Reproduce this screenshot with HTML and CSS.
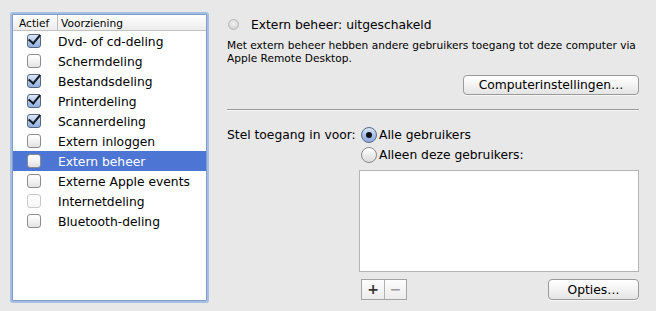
FILE: index.html
```html
<!DOCTYPE html>
<html lang="nl">
<head>
    <meta charset="UTF-8">
    <title>Delen - Extern beheer</title>
    <link rel="stylesheet" href="styles.css">
</head>
<body>
    <div class="window">
        <div class="services">
            <div class="services-head">
                <span class="col-on">Actief</span>
                <span class="col-name">Voorziening</span>
            </div>
            <ul class="service-list">
                <li class="service"><span class="check checked"></span><span class="service-name">Dvd- of cd-deling</span></li>
                <li class="service"><span class="check"></span><span class="service-name">Schermdeling</span></li>
                <li class="service"><span class="check checked"></span><span class="service-name">Bestandsdeling</span></li>
                <li class="service"><span class="check checked"></span><span class="service-name">Printerdeling</span></li>
                <li class="service"><span class="check checked"></span><span class="service-name">Scannerdeling</span></li>
                <li class="service"><span class="check"></span><span class="service-name">Extern inloggen</span></li>
                <li class="service selected"><span class="check"></span><span class="service-name">Extern beheer</span></li>
                <li class="service"><span class="check"></span><span class="service-name">Externe Apple events</span></li>
                <li class="service"><span class="check disabled"></span><span class="service-name">Internetdeling</span></li>
                <li class="service"><span class="check"></span><span class="service-name">Bluetooth-deling</span></li>
            </ul>
        </div>

        <div class="pane">
            <div class="status">
                <span class="status-dot"></span>
                <span class="status-text">Extern beheer: uitgeschakeld</span>
            </div>
            <p class="desc">Met extern beheer hebben andere gebruikers toegang tot deze computer via<br>Apple Remote Desktop.</p>
            <div class="btn-row">
                <button class="btn btn-wide">Computerinstellingen…</button>
            </div>
            <div class="divider"></div>

            <div class="access">
                <span class="access-label">Stel toegang in voor:</span>
                <div class="access-opts">
                    <label class="radio-row"><span class="radio on"></span>Alle gebruikers</label>
                    <label class="radio-row"><span class="radio"></span>Alleen deze gebruikers:</label>
                    <div class="user-list"></div>
                    <div class="list-tools">
                        <div class="seg">
                            <span class="seg-btn">+</span>
                            <span class="seg-btn dim">−</span>
                        </div>
                        <button class="btn btn-opts">Opties…</button>
                    </div>
                </div>
            </div>
        </div>
    </div>
</body>
</html>
```

FILE: styles.css
```css
:root {
    --bg: #e8e8e8;
    --select: #4d75d3;
    --text: #000;
    --font: 'DejaVu Sans', 'Liberation Sans', Arial, sans-serif;
}

* {
    box-sizing: border-box;
}

body {
    margin: 0;
    background: var(--bg);
    font-family: var(--font);
    color: var(--text);
}

.window {
    display: flex;
    align-items: flex-start;
    width: 656px;
    height: 311px;
    padding: 14px 0 0 12px;
}

/* linker lijst met voorzieningen */
.services {
    width: 195px;
    height: 287px;
    background: #fff;
    border: 1px solid #7f9cc9;
    box-shadow: 0 0 0 2px #a5bfe3;
    border-radius: 1px;
}

.services-head {
    display: flex;
    height: 16px;
    font-size: 10.6px;
    line-height: 16px;
    background: linear-gradient(#ffffff, #ececec);
    border-bottom: 1px solid #c2c2c2;
}

.col-on {
    width: 45px;
    padding-left: 6px;
    border-right: 1px solid #bdbdbd;
}

.col-name {
    padding-left: 3px;
}

.service-list {
    list-style: none;
    margin: 0;
    padding: 0;
}

.service {
    display: flex;
    align-items: center;
    height: 20px;
    font-size: 12.3px;
}

.service.selected {
    background: var(--select);
    color: #fff;
}

.check {
    width: 14px;
    height: 14px;
    margin: 0 17px 0 14px;
    border: 1px solid #8c8c8c;
    border-radius: 3px;
    background: linear-gradient(#ffffff, #f4f4f4 45%, #e2e2e2);
    position: relative;
}

.check.checked {
    border-color: #54657e;
    background: linear-gradient(#dfe9f8, #b3c9ec 50%, #90afe0);
}

.check.checked::after {
    content: "";
    position: absolute;
    left: 3px;
    top: -3px;
    width: 5px;
    height: 10px;
    border: solid #151a22;
    border-width: 0 2.5px 2.5px 0;
    transform: rotate(40deg);
}

.check.disabled {
    border-color: #c9c9c9;
    background: linear-gradient(#ffffff, #f6f6f6);
}

.service-name {
    white-space: nowrap;
    padding-top: 1px;
}

/* rechter paneel */
.pane {
    width: 412px;
    margin-left: 20px;
    display: flex;
    flex-direction: column;
}

.status {
    display: flex;
    align-items: center;
    height: 20px;
    padding-top: 1px;
    font-size: 12.3px;
}

.status-dot {
    width: 11px;
    height: 11px;
    margin: 0 12px 0 1px;
    border-radius: 50%;
    border: 1px solid #b8b8b8;
    background: radial-gradient(circle at 50% 40%, #f2f2f2, #c9c9c9);
}

.desc {
    margin: 5px 0 0;
    font-size: 10.6px;
    line-height: 13px;
    white-space: nowrap;
}

.btn-row {
    display: flex;
    justify-content: flex-end;
    margin-top: 10px;
}

.btn {
    font-family: var(--font);
    font-size: 12.3px;
    color: #000;
    height: 20px;
    padding: 0 8px;
    border: 1px solid #9a9a9a;
    border-radius: 4px;
    background: linear-gradient(#ffffff, #f3f3f3 50%, #e4e4e4);
    box-shadow: 0 1px 0 rgba(255,255,255,0.6);
}

.btn-wide {
    width: 176px;
}

.divider {
    height: 2px;
    margin: 14px 0 0;
    border-top: 1px solid #9b9b9b;
    border-bottom: 1px solid #f6f6f6;
}

.access {
    display: flex;
    margin-top: 14px;
}

.access-label {
    width: 132px;
    height: 20px;
    line-height: 21px;
    font-size: 12.3px;
    white-space: nowrap;
}

.access-opts {
    flex: 1;
    display: flex;
    flex-direction: column;
}

.radio-row {
    display: flex;
    align-items: center;
    height: 20px;
    font-size: 12.3px;
    white-space: nowrap;
}

.radio {
    width: 16px;
    height: 16px;
    margin: 0 2px 0 2px;
    border-radius: 50%;
    border: 1px solid #8a8a8a;
    background: linear-gradient(#ffffff, #ececec 50%, #dcdcdc);
    position: relative;
}

.radio.on {
    border-color: #5a6a82;
    background: linear-gradient(#dbe6f7, #a9c2ea 50%, #8aaadf);
}

.radio.on::after {
    content: "";
    position: absolute;
    left: 4px;
    top: 4px;
    width: 6px;
    height: 6px;
    border-radius: 50%;
    background: #111;
}

.user-list {
    height: 102px;
    margin-top: 5px;
    background: #fff;
    border: 1px solid #b4b4b4;
}

.list-tools {
    display: flex;
    justify-content: space-between;
    align-items: center;
    margin-top: 7px;
    padding-left: 2px;
}

.seg {
    display: flex;
    border: 1px solid #a4a4a4;
    background: linear-gradient(#fdfdfd, #ececec);
}

.seg-btn {
    width: 22px;
    height: 19px;
    line-height: 18px;
    text-align: center;
    font-size: 14px;
    font-weight: bold;
    color: #333;
}

.seg-btn + .seg-btn {
    border-left: 1px solid #b0b0b0;
}

.seg-btn.dim {
    color: #9a9a9a;
}

.btn-opts {
    width: 91px;
    height: 21px;
}
```
